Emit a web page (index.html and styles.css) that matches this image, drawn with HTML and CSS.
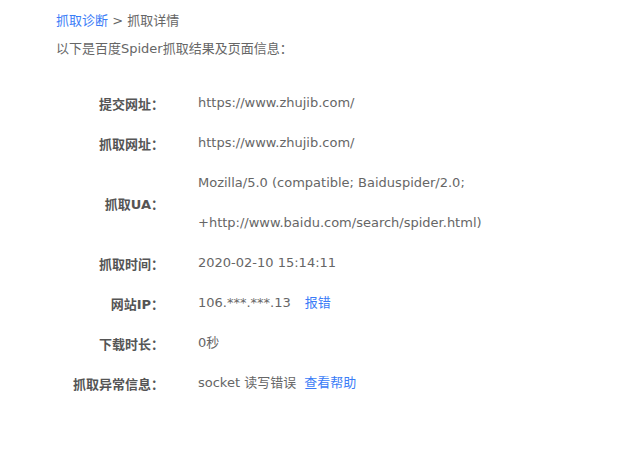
FILE: index.html
```html
<!DOCTYPE html>
<html lang="zh-CN">
<head>
    <meta charset="UTF-8">
    <title>抓取详情</title>
    <link rel="stylesheet" href="styles.css">
</head>
<body>
    <div class="page">
        <div class="crumb">
            <a class="link" href="#">抓取诊断</a> &gt; 抓取详情
        </div>
        <div class="desc">以下是百度Spider抓取结果及页面信息：</div>

        <div class="detail">
            <div class="label">提交网址：</div>
            <div class="value">https://www.zhujib.com/</div>

            <div class="label">抓取网址：</div>
            <div class="value">https://www.zhujib.com/</div>

            <div class="label">抓取UA：</div>
            <div class="value">Mozilla/5.0 (compatible; Baiduspider/2.0;<br>+http://www.baidu.com/search/spider.html)</div>

            <div class="label">抓取时间：</div>
            <div class="value">2020-02-10 15:14:11</div>

            <div class="label">网站IP：</div>
            <div class="value">106.***.***.13<a class="link report" href="#">报错</a></div>

            <div class="label">下载时长：</div>
            <div class="value">0秒</div>

            <div class="label">抓取异常信息：</div>
            <div class="value">socket 读写错误<a class="link help" href="#">查看帮助</a></div>
        </div>
    </div>
</body>
</html>
```

FILE: styles.css
```css
* {
    margin: 0;
    padding: 0;
    box-sizing: border-box;
}

body {
    font-family: Tahoma, "DejaVu Sans", "Noto Sans CJK SC", sans-serif;
    font-size: 13px;
    color: #666;
    background: #fff;
}

.page {
    padding: 11px 0 0 56px;
}

.link {
    color: #3a7cf7;
    text-decoration: none;
}

.crumb {
    line-height: 20px;
}

.desc {
    line-height: 20px;
    margin-top: 8px;
}

/* 抓取详情表 */
.detail {
    display: grid;
    grid-template-columns: 108px 1fr;
    column-gap: 34px;
    margin-top: 24px;
}

.label {
    display: flex;
    align-items: center;
    justify-content: flex-end;
    font-weight: bold;
    color: #555;
}

.value {
    line-height: 40px;
}

.report {
    margin-left: 14px;
}

.help {
    margin-left: 8px;
}
```
